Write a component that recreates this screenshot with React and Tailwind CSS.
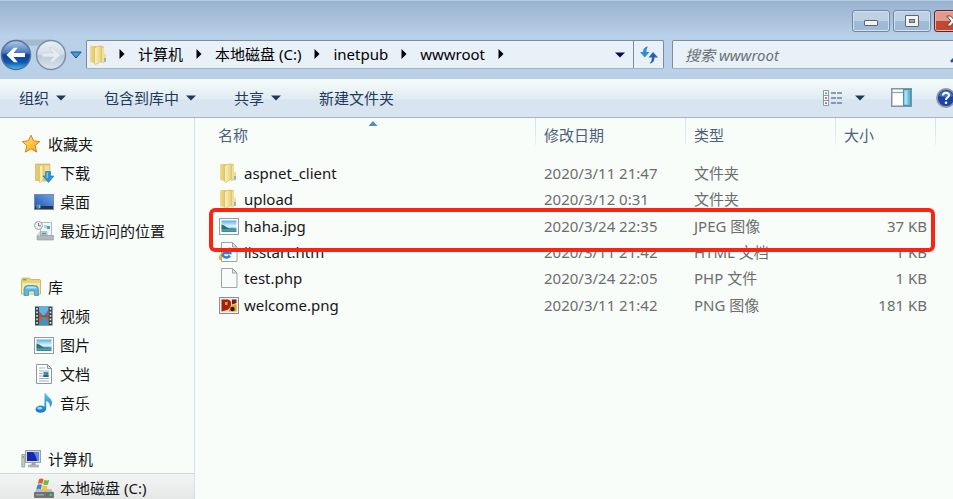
import React from "react";

/* ---------- icons ---------- */

function FolderIcon() {
  return (
    <svg width="20" height="20" viewBox="0 0 20 20" className="shrink-0" aria-hidden="true">
      <defs>
        <linearGradient id="fold-back" x1="0" x2="1">
          <stop offset="0" stopColor="#f0de90" />
          <stop offset="1" stopColor="#dcc064" />
        </linearGradient>
        <linearGradient id="fold-front" x1="0" x2="1">
          <stop offset="0" stopColor="#fbf3c0" />
          <stop offset="1" stopColor="#e8d17c" />
        </linearGradient>
      </defs>
      <path d="M1 1.500Q1 1 1.500 1H7v17.500L1 17Z" fill="url(#fold-back)" />
      <path d="M7 1.500 12 .8q3 0 3 1.200v6.500l1.800 1V17l-4.800 1Z" fill="#e2cb77" />
      <path d="M12 2.500h3v6.300l1.500 1V16l-4.500 1Z" fill="#f0e09a" />
      <path d="M5.500 3.500Q6 1.800 8.500 1.500L11.500 1q.8 0 .8 1v14L7 19.300q-1.500.3-1.500-1Z" fill="url(#fold-front)" stroke="#cfb458" strokeWidth=".6" />
      <rect x="15.200" y="13" width="1.600" height="3.600" fill="#5fb2e0" />
    </svg>
  );
}

function DownloadsIcon() {
  return (
    <svg width="20" height="20" viewBox="0 0 20 20" className="shrink-0" aria-hidden="true">
      <path d="M1.500 1h14.500v17H6L1.500 17.500Z" fill="#e3c96d" stroke="#c9ae55" strokeWidth=".6" />
      <path d="M5.500 3 9 1.500V17l-2.500 2.500h-1Z" fill="#f8edb0" stroke="#cfb458" strokeWidth=".5" />
      <path d="M10.500 2.500h5V12h-5Z" fill="#f2df96" />
      <path d="M11.500 8.500h5V13H20l-5.500 6.500L9 13h2.500Z" fill="#2f92dc" stroke="#1c72bb" strokeWidth=".6" />
      <path d="M12.500 9.500h1.500V15h-1.500Z" fill="#74c3f2" />
    </svg>
  );
}

function StarIcon() {
  return (
    <svg width="20" height="20" viewBox="0 0 20 20" className="shrink-0" aria-hidden="true">
      <defs>
        <linearGradient id="star" x1="0" y1="0" x2="1" y2="1">
          <stop offset="0" stopColor="#ffe58a" />
          <stop offset=".55" stopColor="#ffc53c" />
          <stop offset="1" stopColor="#f39a22" />
        </linearGradient>
      </defs>
      <path d="m10 1.200 2.600 5.700 6.200.6-4.700 4.100 1.500 6.500L10 14.700l-5.600 3.400 1.500-6.500L1.200 7.500l6.200-.6Z" fill="url(#star)" stroke="#e07b1f" strokeWidth="1" strokeLinejoin="round" />
    </svg>
  );
}

function DesktopIcon() {
  return (
    <svg width="20" height="20" viewBox="0 0 20 20" className="shrink-0" aria-hidden="true">
      <defs>
        <linearGradient id="desk" x1="0" y1="1" x2="1" y2="0">
          <stop offset="0" stopColor="#1d4fb0" />
          <stop offset="1" stopColor="#6ea6ea" />
        </linearGradient>
      </defs>
      <rect x=".5" y="2.500" width="19" height="15" fill="url(#desk)" stroke="#7d8ba2" />
      <rect x="1" y="14" width="18" height="3" fill="#27344f" />
      <circle cx="4.500" cy="14.200" r="2.600" fill="#2f7fd0" />
      <path d="M3 13h1.300v1.200H3Z" fill="#f0673a" />
      <path d="M4.700 13H6v1.200H4.700Z" fill="#8fd14f" />
      <path d="M4.700 14.600H6v1.200H4.700Z" fill="#ffd84a" />
    </svg>
  );
}

function RecentIcon() {
  return (
    <svg width="20" height="20" viewBox="0 0 20 20" className="shrink-0" aria-hidden="true">
      <path d="M6.500 1.500h11v13h-11Z" fill="#f4f7f8" stroke="#b4bbc0" />
      <path d="M10 4h3v3h-3Z" fill="#a9d3f2" />
      <path d="M13 5h3v3h-3Z" fill="#4f9bdc" />
      <path d="M7 10.500h6v4H7Z" fill="#bfe0dd" stroke="#8ba9b0" strokeWidth=".6" />
      <path d="M8 11.800h4v1.500H8Z" fill="#3c93a8" />
      <path d="M3 14.500h16.500V19H3Z" fill="#b3b8bb" stroke="#92989b" strokeWidth=".6" />
      <path d="M3.500 13 6 10v4.500H3.500Z" fill="#d5d9db" />
      <circle cx="4.500" cy="4.500" r="4" fill="#eef1f2" stroke="#9aa1a6" />
      <path d="M4.500 2v2.800H7" fill="none" stroke="#5f6a70" strokeWidth=".9" />
    </svg>
  );
}

function LibraryIcon() {
  return (
    <svg width="20" height="20" viewBox="0 0 20 20" className="shrink-0" aria-hidden="true">
      <path d="M.5 2.500 1.500 1h7l1 1.500h9.500l.5 1V17H.5Z" fill="#ecd27b" stroke="#c9ab4f" strokeWidth=".8" />
      <path d="M2 2h3.500v1.500H2Z" fill="#5fb443" />
      <path d="M1 6h18v10.500H1Z" fill="#f6e8a8" />
      <path d="M3 18.500v-6Q3 8.500 7 8.500h6.500q4 0 4 4v6h-4v-4.500h-6v4.500Z" fill="#5cb5e2" stroke="#3289bb" strokeWidth=".7" />
      <path d="M4.500 11.500q.5-2 3-2h5.500q2.500 0 3 2Z" fill="#b4e2f6" />
    </svg>
  );
}

function VideoIcon() {
  return (
    <svg width="20" height="20" viewBox="0 0 20 20" className="shrink-0" aria-hidden="true">
      <rect x="1" y=".5" width="17.500" height="19" fill="#35444c" />
      <rect x="5" y="1" width="9.500" height="8.500" fill="#58b4ea" />
      <rect x="5" y="10.500" width="9.500" height="8.500" fill="#3c93d4" />
      <path d="M5 5 9 9.500H5Z M14.500 4v5.500H10Z" fill="#b8553a" />
      <path d="M5 18V10.500h5Z M14.500 10.500V18L11 12Z" fill="#c4603f" />
      <g fill="#dfe6e8">
        <path d="M2.200 2h1.600v1.800H2.200ZM2.200 5.500h1.600v1.800H2.200ZM2.200 9h1.600v1.800H2.200ZM2.200 12.500h1.600v1.800H2.200ZM2.200 16h1.600v1.800H2.200Z" />
        <path d="M15.700 2h1.600v1.800h-1.600ZM15.700 5.500h1.600v1.800h-1.600ZM15.700 9h1.600v1.800h-1.600ZM15.700 12.500h1.600v1.800h-1.600ZM15.700 16h1.600v1.800h-1.600Z" />
      </g>
    </svg>
  );
}

function PictureIcon() {
  return (
    <svg width="20" height="20" viewBox="0 0 20 20" className="shrink-0" aria-hidden="true">
      <defs>
        <linearGradient id="pic-sky" x1="0" y1="0" x2="0" y2="1">
          <stop offset="0" stopColor="#59aee8" />
          <stop offset=".5" stopColor="#e2f6fc" />
          <stop offset=".7" stopColor="#7cc4da" />
          <stop offset="1" stopColor="#2a7db4" />
        </linearGradient>
      </defs>
      <rect x=".5" y="2.500" width="19" height="16" fill="#fbfcfc" stroke="#959b9f" />
      <rect x="2.500" y="4.500" width="15" height="11.500" fill="url(#pic-sky)" />
      <path d="M2.500 8.500q3 .5 5 2.500t5 1.200l5 .6v.8H2.500Z" fill="#2f7560" />
    </svg>
  );
}

function DocumentIcon() {
  return (
    <svg width="20" height="20" viewBox="0 0 20 20" className="shrink-0" aria-hidden="true">
      <path d="M2.500.5h11l4 4v15h-15Z" fill="#fdfefe" stroke="#8f989e" />
      <path d="M13.500.5v4h4Z" fill="#d9dee1" stroke="#8f989e" />
      <path d="M5 4h6M5 7h10M5 9.500h4M5 12h4M5 14.500h10M5 17h10" stroke="#a3b1c6" />
      <rect x="9.500" y="8" width="5" height="5" fill="#3a8bc8" />
      <path d="M9.500 11h5v2h-5Z" fill="#2b6a57" />
    </svg>
  );
}

function MusicIcon() {
  return (
    <svg width="20" height="20" viewBox="0 0 20 20" className="shrink-0" aria-hidden="true">
      <defs>
        <linearGradient id="note" x1="0" y1="0" x2="0" y2="1">
          <stop offset="0" stopColor="#55bff0" />
          <stop offset="1" stopColor="#1678c4" />
        </linearGradient>
      </defs>
      <path d="M10.500.5h1.700c.5 3.500 5.800 4.500 5.800 9 0 2.500-1.300 4-2 5 .2-3.500-.8-5.500-3.800-6.500v7.500c0 2.400-2.400 4.200-5.700 4.200-3 0-5-1.200-5-3.200 0-2.300 2.500-4 5.500-4 1.300 0 2.600.4 3.500 1Z" fill="url(#note)" />
      <ellipse cx="5.800" cy="15.300" rx="2.600" ry="1.300" fill="#8fd8f8" />
    </svg>
  );
}

function ComputerIcon() {
  return (
    <svg width="20" height="20" viewBox="0 0 20 20" className="shrink-0" aria-hidden="true">
      <path d="M.8 5.500h3V18h-3Z" fill="#c5c9cb" stroke="#8b9093" strokeWidth=".7" />
      <path d="M1.500 7h1.500v2H1.500Z" fill="#4ec94a" />
      <rect x="4.500" y="1.500" width="15" height="12" fill="#d8dadb" stroke="#9a9fa2" />
      <rect x="6" y="3" width="12" height="9" fill="#1428b4" />
      <path d="M12 3h6v9h-2Q15 6 12 3Z" fill="#5f87ea" />
      <path d="M10.500 14h4v2h-4Z" fill="#9fa4a7" />
      <path d="M7.500 16h10v2h-10Z" fill="#bdc1c3" stroke="#90969a" strokeWidth=".6" />
    </svg>
  );
}

function DriveIcon() {
  return (
    <svg width="20" height="20" viewBox="0 0 20 20" className="shrink-0" aria-hidden="true">
      <path d="M3 11h14l2.500 3.500H.5Z" fill="#b9bdbf" />
      <path d="M.5 14.500h19v5H.5Z" fill="#6c7276" stroke="#4e5356" strokeWidth=".6" />
      <path d="M2 16h8v1.500H2Z" fill="#9da3a6" />
      <path d="M15.500 16h2.500v1.800h-2.500Z" fill="#3be04e" />
      <path d="M5 1.200Q7-.2 9.500 1.200L8.300 5.800Q6 4.800 3.800 6Z" fill="#e85a28" />
      <path d="M10.300 1.800q2.400 1.200 5 0l-1.400 5q-2.300.8-4.800-.6Z" fill="#73b943" />
      <path d="M3.500 7Q5.800 5.700 8 6.800L6.800 11.200q-2.300-1-4.600.2Z" fill="#3c83d2" />
      <path d="M8.800 7.200q2.400 1.200 4.800.5l-1.300 4.600q-2.400.8-4.700-.6Z" fill="#f8c22d" />
    </svg>
  );
}

function HtmlFileIcon() {
  return (
    <svg width="20" height="20" viewBox="0 0 20 20" className="shrink-0" aria-hidden="true">
      <path d="M2.500.5h11l4.500 4.500v14.500H2.500Z" fill="#fcfdfd" stroke="#a0a4a6" />
      <path d="M13.500.5V5H18Z" fill="#e2e5e6" stroke="#a0a4a6" />
      <path d="M10.800 13.500a4 4 0 1 1 .5-2.500H4.500" fill="none" stroke="#2a83cf" strokeWidth="2.600" />
      <path d="M2.500 16.500Q-.5 18 1 14" fill="none" stroke="#f3ae2e" strokeWidth="2.400" />
      <path d="M1 14Q4 8 11.500 5.500" fill="none" stroke="#f3ae2e" strokeWidth="1.200" />
    </svg>
  );
}

function BlankFileIcon() {
  return (
    <svg width="20" height="20" viewBox="0 0 20 20" className="shrink-0" aria-hidden="true">
      <path d="M2.500.5h11l4.500 4.500v14.500h-15.500Z" fill="#fafbfb" stroke="#a0a4a6" />
      <path d="M13.500.5V5H18Z" fill="#e2e5e6" stroke="#a0a4a6" />
    </svg>
  );
}

function PngFileIcon() {
  return (
    <svg width="20" height="20" viewBox="0 0 20 20" className="shrink-0" aria-hidden="true">
      <rect x=".5" y="2.500" width="19" height="16" fill="#f5f3f0" stroke="#8d8d8f" />
      <rect x="2.500" y="4.500" width="15" height="12" fill="#f0d9ae" />
      <path d="M2.500 4.500H9q3.500 1 3 5T8 15l-5.500 1.500Z" fill="#a81c12" />
      <path d="M6 7h2.500v3H6Z" fill="#e9a23a" />
      <path d="M10 16.500q0-5 4-6.500l3.500-1v7.500Z" fill="#e59f24" />
      <circle cx="13.500" cy="14" r="2.200" fill="#2b1710" />
      <path d="M13 4.500h4.500V8L13 9.500Z" fill="#7a1b12" />
    </svg>
  );
}

function Caret({ className = "" }) {
  return (
    <svg width="10" height="6" viewBox="0 0 10 6" className={"shrink-0 " + className} aria-hidden="true">
      <path d="M0 .5h10L5 5.500Z" fill="currentColor" />
    </svg>
  );
}

function Chevron() {
  return (
    <svg width="6" height="10" viewBox="0 0 6 10" className="shrink-0 text-black" aria-hidden="true">
      <path d="M.5 0v10L5.500 5Z" fill="currentColor" />
    </svg>
  );
}

function NavButtons() {
  return (
    <svg width="68" height="34" viewBox="0 0 68 34" aria-hidden="true">
      <defs>
        <linearGradient id="back-fill" x1="0" y1="0" x2="0" y2="1">
          <stop offset="0" stopColor="#b4cbea" />
          <stop offset=".42" stopColor="#4a78c0" />
          <stop offset=".5" stopColor="#12409a" />
          <stop offset=".75" stopColor="#0f55b4" />
          <stop offset="1" stopColor="#3fc8f4" />
        </linearGradient>
        <linearGradient id="fwd-fill" x1="0" y1="0" x2="0" y2="1">
          <stop offset="0" stopColor="#e9eff5" />
          <stop offset=".48" stopColor="#d3dde7" />
          <stop offset=".52" stopColor="#bccbd9" />
          <stop offset="1" stopColor="#dbe5ee" />
        </linearGradient>
      </defs>
      <path d="M16 1.500h35v8q-17-4-35 0Z" fill="#a5b9cf" />
      <circle cx="16" cy="17" r="14.500" fill="url(#back-fill)" stroke="#5a7294" strokeWidth="1.500" />
      <path d="M6.500 17 14 9.800h3.800L13.500 15H25v4H13.500l4.300 5.200H14Z" fill="#fff" />
      <circle cx="51" cy="17" r="14.500" fill="url(#fwd-fill)" stroke="#7f8fa2" strokeWidth="1.500" />
      <path d="M60.500 17 53 9.800h-3.800l4.300 5.200H42v4h11.500l-4.300 5.200H53Z" fill="#e6ecf2" stroke="#c3cfdb" strokeWidth=".6" />
    </svg>
  );
}

function RefreshIcon() {
  return (
    <svg width="20" height="18" viewBox="0 0 20 18" aria-hidden="true">
      <path d="M9 .5Q4 1 4 6H1l4.800 5.500L10.500 6H7.500Q7 3 9 .5Z" fill="#2b8fd0" />
      <path d="M10.500 17.500q5-.5 5-6H19l-5-5.500L9.500 11.500H13q0 4-2.500 6Z" fill="#2a62b0" />
    </svg>
  );
}

function ViewIcon() {
  return (
    <svg width="20" height="18" viewBox="0 0 20 18" aria-hidden="true">
      <path d="M.5 1.500h5v15h-5ZM.5 6.500h5M.5 11.500h5" fill="#fff" stroke="#8a98a8" />
      <path d="M2 3.500h2v1.500H2Z" fill="#5aa36b" />
      <path d="M2 8.200h2v1.800H2Z" fill="#e0523a" />
      <path d="M2 13.200h2v1.800H2Z" fill="#3f8ed0" />
      <path d="M8 4h5M14 4h5M8 9h5M14 9h5M8 14h5M14 14h5" stroke="#6b7f98" strokeWidth="1.400" />
    </svg>
  );
}

function PreviewIcon() {
  return (
    <svg width="21" height="19" viewBox="0 0 21 19" aria-hidden="true">
      <rect x=".75" y=".75" width="19.500" height="17.500" fill="#fdfefe" stroke="#8093a8" strokeWidth="1.500" />
      <path d="M1 4.500h12" stroke="#8fa1b5" strokeWidth="1.200" />
      <rect x="12.500" y="1.500" width="7" height="16" fill="#62bcdc" stroke="#4791ae" />
      <path d="M13.500 2.500h3v14h-3Z" fill="#a5dff0" />
    </svg>
  );
}

function HelpIcon() {
  return (
    <svg width="20" height="20" viewBox="0 0 20 20" className="shrink-0" aria-hidden="true">
      <circle cx="10" cy="10" r="9" fill="#1c44a8" stroke="#8b97a6" strokeWidth="1.800" />
      <path d="M3 8q2-5 7-5t7 5q-7 2-14 0Z" fill="#4a74ce" />
      <path d="M7 7.500q0-2.800 3-2.800t3 2.600q0 1.500-1.600 2.300-1.400.8-1.400 2.400" fill="none" stroke="#fff" strokeWidth="2" />
      <circle cx="10" cy="14.800" r="1.300" fill="#fff" />
    </svg>
  );
}

/* ---------- data ---------- */

const crumbs = ["计算机", "本地磁盘 (C:)", "inetpub", "wwwroot"];

const navGroups = [
  {
    title: "收藏夹",
    Icon: StarIcon,
    items: [
      { label: "下载", Icon: DownloadsIcon },
      { label: "桌面", Icon: DesktopIcon },
      { label: "最近访问的位置", Icon: RecentIcon },
    ],
  },
  {
    title: "库",
    Icon: LibraryIcon,
    items: [
      { label: "视频", Icon: VideoIcon },
      { label: "图片", Icon: PictureIcon },
      { label: "文档", Icon: DocumentIcon },
      { label: "音乐", Icon: MusicIcon },
    ],
  },
  {
    title: "计算机",
    Icon: ComputerIcon,
    items: [{ label: "本地磁盘 (C:)", Icon: DriveIcon, current: true }],
  },
];

const files = [
  { name: "aspnet_client", date: "2020/3/11 21:47", type: "文件夹", size: "", Icon: FolderIcon },
  { name: "upload", date: "2020/3/12 0:31", type: "文件夹", size: "", Icon: FolderIcon },
  { name: "haha.jpg", date: "2020/3/24 22:35", type: "JPEG 图像", size: "37 KB", Icon: PictureIcon },
  { name: "iisstart.htm", date: "2020/3/11 21:42", type: "HTML 文档", size: "1 KB", Icon: HtmlFileIcon },
  { name: "test.php", date: "2020/3/24 22:05", type: "PHP 文件", size: "1 KB", Icon: BlankFileIcon },
  { name: "welcome.png", date: "2020/3/11 21:42", type: "PNG 图像", size: "181 KB", Icon: PngFileIcon },
];

/* ---------- window parts ---------- */

function TitleBar() {
  const button =
    "flex h-[22px] w-[38px] shrink-0 items-center justify-center rounded-[3px] border border-[#6d88a6] bg-linear-to-b from-[#bdd1e4] from-50% to-[#9fbad4] to-50% shadow-[inset_0_0_0_1px_#d3e1ee]";
  return (
    <header className="flex h-10 items-start justify-end gap-[3px] overflow-hidden border-t border-[#b5cbe0] pt-[9px]">
      <button type="button" aria-label="最小化" className={button}>
        <span className="mt-1 h-[6px] w-[14px] rounded-[1px] border border-[#5d6670] bg-[#f3f3ee]" />
      </button>
      <button type="button" aria-label="最大化" className={button}>
        <span className="flex h-3 w-[14px] items-center justify-center rounded-[1px] border border-[#5d6670] bg-[#f3f3ee]">
          <span className="h-1 w-[6px] border border-[#5d6670] bg-[#8fb0d0]" />
        </span>
      </button>
      <button
        type="button"
        aria-label="关闭"
        className="-mr-[19px] flex h-[22px] w-[38px] shrink-0 items-center justify-center rounded-[3px] border border-[#5b2230] bg-linear-to-b from-[#e29a8c] from-50% to-[#c04a30] to-50% shadow-[inset_0_0_0_1px_#e8b5aa]"
      >
        <svg width="14" height="12" viewBox="0 0 14 12" aria-hidden="true">
          <path d="M.7 1h4L7 3.700 9.300 1h4L9.200 6l4.100 5h-4L7 8.300 4.700 11h-4L4.800 6Z" fill="#f6f4f2" stroke="#5e3a3c" strokeWidth=".9" />
        </svg>
      </button>
    </header>
  );
}

function AddressRow() {
  return (
    <div className="flex h-[39px] items-start">
      <div className="-mt-[2px] flex w-[86px] shrink-0 items-center">
        <button type="button" aria-label="后退和前进" className="shrink-0">
          <NavButtons />
        </button>
        <button type="button" aria-label="最近的页面" className="ml-[2px]">
          <svg width="12" height="8" viewBox="0 0 12 8" aria-hidden="true">
            <path d="M.8 1h10.400L6 7Z" fill="#3fa0d8" stroke="#1f4f86" />
          </svg>
        </button>
      </div>
      <nav
        aria-label="地址"
        className="flex h-[29px] min-w-0 flex-1 items-center rounded-[2px] border border-[#7d8b9a] border-b-[#a9b3bd] bg-[#e8f0f8] pl-[2px]"
      >
        <FolderIcon />
        <div className="flex items-center gap-[13px] pb-[2px] pl-[10px]">
          <Chevron />
          {crumbs.map((c) => (
            <React.Fragment key={c}>
              <button type="button" className="whitespace-nowrap text-black">
                {c}
              </button>
              <Chevron />
            </React.Fragment>
          ))}
        </div>
        <button type="button" aria-label="以前的位置" className="mr-2 ml-auto text-[#0a0a5c]">
          <Caret />
        </button>
        <button
          type="button"
          aria-label="刷新"
          className="flex h-full w-[30px] shrink-0 items-center justify-center border-l border-[#7d8b9a]"
        >
          <RefreshIcon />
        </button>
      </nav>
      <div className="-mr-5 ml-2 flex h-[29px] w-[301px] shrink-0 items-center rounded-[2px] border border-[#7d8b9a] border-b-[#a9b3bd] bg-[#e8f0f8] pl-3">
        <input
          type="search"
          aria-label="搜索 wwwroot"
          placeholder="搜索 wwwroot"
          className="h-[27px] w-[265px] bg-transparent italic outline-none placeholder:text-[#6b7075]"
        />
        <svg width="18" height="18" viewBox="0 0 18 18" className="shrink-0" aria-hidden="true">
          <path d="M2 15 7 10" stroke="#2c4f8e" strokeWidth="3" strokeLinecap="round" />
          <circle cx="11" cy="6" r="4.500" fill="none" stroke="#2c4f8e" strokeWidth="1.500" />
        </svg>
      </div>
    </div>
  );
}

function Toolbar() {
  return (
    <div
      role="toolbar"
      className="flex h-[39px] items-center overflow-hidden border-t border-b border-t-[#f9fcfd] border-b-[#a3b4c9] bg-linear-to-b from-[#f6fbf9] via-[#e0ecf3] via-50% to-[#d8e4ef] to-55% pb-[2px] pl-[19px] whitespace-nowrap text-[#1e395b]"
    >
      <div className="flex flex-1 items-center gap-[38px]">
        <button type="button" className="flex items-center gap-[7px]">
          组织 <Caret />
        </button>
        <button type="button" className="flex items-center gap-[7px]">
          包含到库中 <Caret />
        </button>
        <button type="button" className="flex items-center gap-[7px]">
          共享 <Caret />
        </button>
        <button type="button">新建文件夹</button>
      </div>
      <button type="button" aria-label="更改视图" className="flex items-center gap-3">
        <ViewIcon />
        <Caret />
      </button>
      <button type="button" aria-label="显示预览窗格" className="ml-[26px]">
        <PreviewIcon />
      </button>
      <button type="button" aria-label="帮助" className="-mr-[3px] ml-6 shrink-0">
        <HelpIcon />
      </button>
    </div>
  );
}

function Sidebar() {
  return (
    <aside className="w-[195px] shrink-0 border-r border-[#cfe0f0] pt-3">
      <nav aria-label="导航窗格" className="flex flex-col gap-7">
        {navGroups.map(({ title, Icon, items }) => (
          <section key={title}>
            <button type="button" className="flex h-7 w-full items-center gap-[7px] pl-[21px] text-left">
              <Icon />
              {title}
            </button>
            {items.map(({ label, Icon: ItemIcon, current }) => (
              <button
                key={label}
                type="button"
                aria-current={current ? "page" : undefined}
                className={
                  "flex h-[29px] w-full items-center gap-[6px] border-t pl-[34px] text-left " +
                  (current ? "border-[#d5d8d8] bg-linear-to-b from-[#f3f5f4] to-[#e3e6e5]" : "border-transparent")
                }
              >
                <ItemIcon />
                {label}
              </button>
            ))}
          </section>
        ))}
      </nav>
    </aside>
  );
}

function HeaderCell({ children, className = "", sorted }) {
  return (
    <th
      scope="col"
      aria-sort={sorted ? "ascending" : undefined}
      className={"relative h-[42px] px-2 pb-2 text-left align-middle font-normal text-[#4c607a] " + className}
    >
      {children}
      {sorted && (
        <svg width="9" height="5" viewBox="0 0 9 5" className="absolute top-[3px] left-1/2 -translate-x-1/2" aria-hidden="true">
          <path d="M0 5 4.500 0 9 5Z" fill="#4a90b8" />
        </svg>
      )}
      <span className="absolute top-0 right-0 h-[27px] w-px bg-linear-to-b from-[#d3e0ee] to-[#eaf1f6]" />
    </th>
  );
}

function FileList() {
  return (
    <main className="relative min-w-0 flex-1 pr-[17px] pl-[15px]">
      <table className="w-full table-fixed border-collapse whitespace-nowrap">
        <thead>
          <tr>
            <HeaderCell sorted>名称</HeaderCell>
            <HeaderCell className="w-[150px]">修改日期</HeaderCell>
            <HeaderCell className="w-[150px]">类型</HeaderCell>
            <HeaderCell className="w-[100px]">大小</HeaderCell>
          </tr>
        </thead>
        <tbody className="h-[158px] text-[#6d6d6d]">
          {files.map(({ name, date, type, size, Icon }) => (
            <tr key={name}>
              <td className="p-0 pl-[9px]">
                <span className="flex items-center gap-[5px] text-[#161616]">
                  <Icon />
                  {name}
                </span>
              </td>
              <td className="p-0 pl-2">{date}</td>
              <td className="p-0 pl-2">{type}</td>
              <td className="p-0 pr-[9px] text-right">{size}</td>
            </tr>
          ))}
        </tbody>
      </table>
      {/* highlight frame around haha.jpg */}
      <div className="pointer-events-none absolute top-[90px] right-[18px] left-[14px] h-11 rounded-md border-4 border-[#fb2312]" />
    </main>
  );
}

export default function App() {
  return (
    <div className="flex h-screen flex-col overflow-hidden bg-[#f8fdfa] font-['Noto_Sans','Noto_Sans_CJK_SC',sans-serif] text-[15px] leading-5 text-[#161616]">
      <div className="bg-linear-to-b from-[#98b1cd] via-[#b8d0e8] via-45% to-[#b8d0e8]">
        <TitleBar />
        <AddressRow />
      </div>
      <Toolbar />
      <div className="flex min-h-0 flex-1">
        <Sidebar />
        <FileList />
      </div>
    </div>
  );
}
